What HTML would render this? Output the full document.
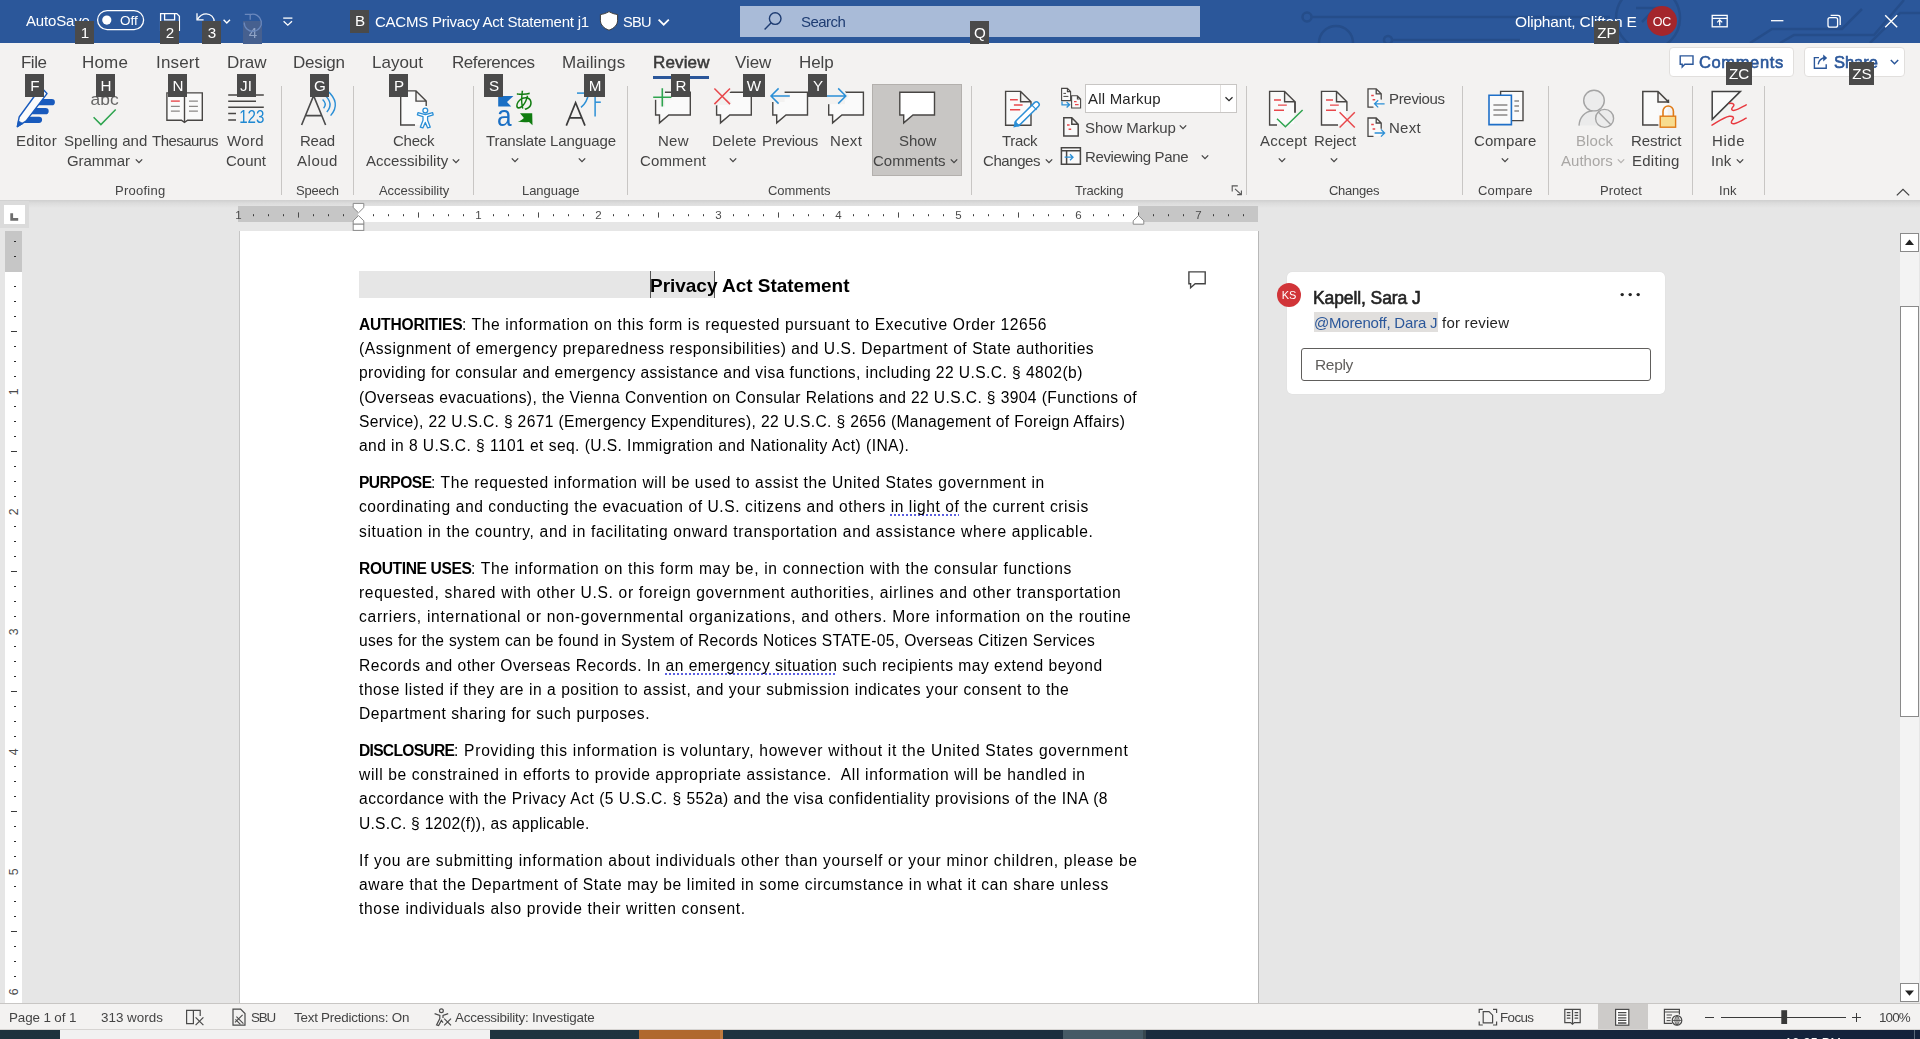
<!DOCTYPE html>
<html lang="en"><head><meta charset="utf-8"><title>CACMS Privacy Act Statement j1 - Word</title>
<style>
html,body{margin:0;padding:0;}
body{width:1920px;height:1039px;overflow:hidden;position:relative;background:#e6e6e6;font-family:"Liberation Sans", sans-serif;}
span{will-change:transform;}

</style></head><body>
<div style="position:absolute;left:0px;top:0px;width:1920px;height:43px;background:#2b579a;"></div>
<div style="position:absolute;left:0px;top:43px;width:1920px;height:157px;background:#f3f2f1;"></div>
<div style="position:absolute;left:0px;top:200px;width:1920px;height:8px;background:linear-gradient(#cfcfcf,#dcdcdc 40%,#e6e6e6);"></div>
<svg style="position:absolute;left:1280px;top:0px;" width="640" height="43" viewBox="0 0 640 43">
<g fill="none" stroke="#254d8a" stroke-width="2.5">
<circle cx="27" cy="17" r="4.5"/><path d="M32 17H330"/>
<circle cx="56" cy="43" r="17"/><circle cx="108" cy="40" r="4"/><path d="M112 40H240"/>
<circle cx="368" cy="18" r="32"/><path d="M356 8h20l-14 14"/>
<path d="M470 43l22-14h70l20-20"/><path d="M500 43l14-8h80l30-35"/><path d="M590 43l30-30h20"/>
</g></svg>
<span style="position:absolute;left:25.60px;top:12px;font-size:15px;line-height:18px;color:#fff;white-space:pre;letter-spacing:-0.156px;">AutoSave</span>
<svg style="position:absolute;left:0px;top:0px;" width="320" height="43" viewBox="0 0 320 43">
<g fill="none" stroke="#fff" stroke-width="1.3">
<rect x="97.6" y="10.6" width="46" height="19" rx="9.5"/>
<circle cx="106.8" cy="20.1" r="4.6" fill="#fff" stroke="none"/>
<path d="M160.6 13.6h16.2l2.6 2.6v14.2h-18.8z"/><path d="M164.6 13.8v6h10v-6"/><path d="M163.6 30.4v-6.5h12.6v6.5"/>
<path d="M197 13.2v6.6h6.6"/><path d="M197.4 19.4c2.2-3.6 5.4-5.6 8.8-5.6 4.6 0 8 3.6 8 8 0 4.6-3.6 8.2-8 8.2"/>
<path d="M223.6 19.8l3.2 3.2 3.2-3.2" stroke-width="1.4"/>

<path d="M283.2 18.1h9.2" stroke-width="1.3"/><path d="M283.6 21.2l4.2 4 4.2-4" stroke-width="1.3"/>
</g></svg>
<span style="position:absolute;left:119.99px;top:13px;font-size:13.5px;line-height:16px;color:#fff;white-space:pre;letter-spacing:0.018px;">Off</span>
<span style="position:absolute;left:375.30px;top:13px;font-size:15px;line-height:18px;color:#fff;white-space:pre;letter-spacing:-0.234px;">CACMS Privacy Act Statement j1</span>
<svg style="position:absolute;left:596px;top:8px;" width="26" height="26" viewBox="0 0 26 26"><path d="M13 3.6c2.8 1.6 5.6 2.6 8.6 2.9v5.8c0 4.6-3.4 8-8.6 9.9-5.2-1.9-8.6-5.3-8.6-9.9V6.5c3-.3 5.8-1.3 8.6-2.9z" fill="#fff" stroke="#3c3c3c" stroke-width="1"/></svg>
<span style="position:absolute;left:623.42px;top:13px;font-size:14.6px;line-height:18px;color:#fff;white-space:pre;letter-spacing:-0.721px;">SBU</span>
<svg style="position:absolute;left:655px;top:15px;" width="18" height="14" viewBox="0 0 18 14"><path d="M3.6 4.6l5.1 5.1 5.1-5.1" fill="none" stroke="#fff" stroke-width="1.7"/></svg>
<div style="position:absolute;left:740px;top:6px;width:460px;height:31px;background:#a9bbd8;"></div>
<svg style="position:absolute;left:760px;top:8px;" width="28" height="26" viewBox="0 0 28 26"><g fill="none" stroke="#1e3c72" stroke-width="1.4"><circle cx="15.2" cy="10.6" r="5.8"/><path d="M11.2 14.8L4.6 21.6"/></g></svg>
<span style="position:absolute;left:800.90px;top:13px;font-size:15px;line-height:18px;color:#1e3c72;white-space:pre;letter-spacing:-0.555px;">Search</span>
<span style="position:absolute;left:1515.27px;top:12px;font-size:15.5px;line-height:19px;color:#fff;white-space:pre;letter-spacing:-0.173px;">Oliphant, Clifton E</span>
<div style="position:absolute;left:1647px;top:6px;width:30px;height:30px;background:#a4262c;border-radius:50%;"></div>
<span style="position:absolute;left:1162.00px;top:15px;font-size:12.5px;line-height:15px;color:#fff;white-space:pre;width:1000px;text-align:center;">OC</span>
<svg style="position:absolute;left:1700px;top:8px;" width="210" height="28" viewBox="0 0 210 28"><g fill="none" stroke="#fff" stroke-width="1.3">
<rect x="12.2" y="7.4" width="15" height="11.4"/><path d="M12.2 10.4h15"/><path d="M19.7 17.4v-5.2M17.2 14.4l2.5-2.5 2.5 2.5"/>
<path d="M71 12.7h12.4"/>
<rect x="128" y="9.6" width="9.6" height="9.6" rx="2"/><path d="M130.6 7.3h7.2a2.4 2.4 0 0 1 2.4 2.4v7.2"/>
<path d="M185.2 7.2l12 12M197.2 7.2l-12 12" stroke-width="1.4"/>
</g></svg>
<span style="position:absolute;left:20.88px;top:53px;font-size:17px;line-height:20px;color:#444444;white-space:pre;letter-spacing:-0.517px;">File</span>
<span style="position:absolute;left:82.18px;top:53px;font-size:17px;line-height:20px;color:#444444;white-space:pre;letter-spacing:0.170px;">Home</span>
<span style="position:absolute;left:155.98px;top:53px;font-size:17px;line-height:20px;color:#444444;white-space:pre;letter-spacing:0.168px;">Insert</span>
<span style="position:absolute;left:226.68px;top:53px;font-size:17px;line-height:20px;color:#444444;white-space:pre;letter-spacing:-0.033px;">Draw</span>
<span style="position:absolute;left:293.18px;top:53px;font-size:17px;line-height:20px;color:#444444;white-space:pre;letter-spacing:-0.197px;">Design</span>
<span style="position:absolute;left:372.18px;top:53px;font-size:17px;line-height:20px;color:#444444;white-space:pre;letter-spacing:-0.001px;">Layout</span>
<span style="position:absolute;left:452.18px;top:53px;font-size:17px;line-height:20px;color:#444444;white-space:pre;letter-spacing:-0.440px;">References</span>
<span style="position:absolute;left:562.48px;top:53px;font-size:17px;line-height:20px;color:#444444;white-space:pre;letter-spacing:0.110px;">Mailings</span>
<span style="position:absolute;left:735.48px;top:53px;font-size:17px;line-height:20px;color:#444444;white-space:pre;letter-spacing:-0.077px;">View</span>
<span style="position:absolute;left:799.18px;top:53px;font-size:17px;line-height:20px;color:#444444;white-space:pre;letter-spacing:-0.057px;">Help</span>
<span style="position:absolute;left:652.58px;top:53px;font-size:17px;line-height:20px;color:#3b3b3b;white-space:pre;letter-spacing:0.148px;-webkit-text-stroke:0.55px #3b3b3b;">Review</span>
<div style="position:absolute;left:653px;top:75.5px;width:56px;height:3.5px;background:#2b579a;"></div>
<div style="position:absolute;left:1669px;top:47px;width:124.5px;height:30px;background:#fff;border:1px solid #e1dfdd;border-radius:4px;box-sizing:border-box;"></div>
<div style="position:absolute;left:1804px;top:47px;width:100.6px;height:30px;background:#fff;border:1px solid #e1dfdd;border-radius:4px;box-sizing:border-box;"></div>
<svg style="position:absolute;left:1676px;top:50px;" width="24" height="22" viewBox="0 0 24 22"><path d="M4.2 5.9h12.8v8.4h-8.2l-2.6 2.7v-2.7h-2z" fill="none" stroke="#2b579a" stroke-width="1.4"/></svg>
<span style="position:absolute;left:1698.51px;top:52px;font-size:16.5px;line-height:20px;color:#2b579a;white-space:pre;letter-spacing:0.625px;-webkit-text-stroke:0.6px #2b579a;">Comments</span>
<svg style="position:absolute;left:1810px;top:50px;" width="24" height="22" viewBox="0 0 24 22"><g fill="none" stroke="#2b579a" stroke-width="1.4"><path d="M9 7.6H4.4v10.6h11.8v-4"/><path d="M8.2 14.4c.6-4.2 3.4-6.4 7.4-6.6"/><path d="M13.2 4.4l4 3.5-4 3.5z" fill="#2b579a" stroke="none"/></g></svg>
<span style="position:absolute;left:1833.51px;top:52px;font-size:16.5px;line-height:20px;color:#2b579a;white-space:pre;letter-spacing:-0.050px;-webkit-text-stroke:0.6px #2b579a;">Share</span>
<svg style="position:absolute;left:1886px;top:55px;" width="16" height="14" viewBox="0 0 16 14"><path d="M4.8 5l3.7 3.7L12.2 5" fill="none" stroke="#2b579a" stroke-width="1.5"/></svg>
<div style="position:absolute;left:281.0px;top:86px;width:1px;height:109px;background:#c8c6c4;"></div>
<div style="position:absolute;left:352.8px;top:86px;width:1px;height:109px;background:#c8c6c4;"></div>
<div style="position:absolute;left:472.8px;top:86px;width:1px;height:109px;background:#c8c6c4;"></div>
<div style="position:absolute;left:627.0px;top:86px;width:1px;height:109px;background:#c8c6c4;"></div>
<div style="position:absolute;left:971.0px;top:86px;width:1px;height:109px;background:#c8c6c4;"></div>
<div style="position:absolute;left:1245.8px;top:86px;width:1px;height:109px;background:#c8c6c4;"></div>
<div style="position:absolute;left:1462.0px;top:86px;width:1px;height:109px;background:#c8c6c4;"></div>
<div style="position:absolute;left:1547.8px;top:86px;width:1px;height:109px;background:#c8c6c4;"></div>
<div style="position:absolute;left:1691.9px;top:86px;width:1px;height:109px;background:#c8c6c4;"></div>
<div style="position:absolute;left:1764.1px;top:86px;width:1px;height:109px;background:#c8c6c4;"></div>
<div style="position:absolute;left:872px;top:84px;width:90px;height:92px;background:#c8c6c4;border:1px solid #b3b0ad;box-sizing:border-box;"></div>
<span style="position:absolute;left:15.70px;top:132px;font-size:15px;line-height:18px;color:#444444;white-space:pre;letter-spacing:0.302px;">Editor</span>
<span style="position:absolute;left:63.70px;top:132px;font-size:15px;line-height:18px;color:#444444;white-space:pre;letter-spacing:0.068px;">Spelling and</span>
<span style="position:absolute;left:67.40px;top:152px;font-size:15px;line-height:18px;color:#444444;white-space:pre;letter-spacing:-0.063px;">Grammar</span>
<svg style="position:absolute;left:132.5px;top:156.2px;" width="12" height="10" viewBox="0 0 12 10"><path d="M2.8 3.4l3.2 3.2l3.2 -3.2" fill="none" stroke="#444" stroke-width="1.3"/></svg>
<span style="position:absolute;left:151.60px;top:132px;font-size:15px;line-height:18px;color:#444444;white-space:pre;letter-spacing:-0.531px;">Thesaurus</span>
<span style="position:absolute;left:227.40px;top:132px;font-size:15px;line-height:18px;color:#444444;white-space:pre;letter-spacing:0.380px;">Word</span>
<span style="position:absolute;left:225.50px;top:152px;font-size:15px;line-height:18px;color:#444444;white-space:pre;letter-spacing:-0.006px;">Count</span>
<span style="position:absolute;left:114.82px;top:183px;font-size:13px;line-height:16px;color:#444444;white-space:pre;letter-spacing:0.242px;">Proofing</span>
<span style="position:absolute;left:300.40px;top:132px;font-size:15px;line-height:18px;color:#444444;white-space:pre;letter-spacing:-0.265px;">Read</span>
<span style="position:absolute;left:297.40px;top:152px;font-size:15px;line-height:18px;color:#444444;white-space:pre;letter-spacing:0.525px;">Aloud</span>
<span style="position:absolute;left:295.62px;top:183px;font-size:13px;line-height:16px;color:#444444;white-space:pre;letter-spacing:-0.239px;">Speech</span>
<span style="position:absolute;left:393.20px;top:132px;font-size:15px;line-height:18px;color:#444444;white-space:pre;letter-spacing:-0.226px;">Check</span>
<span style="position:absolute;left:365.50px;top:152px;font-size:15px;line-height:18px;color:#444444;white-space:pre;letter-spacing:0.039px;">Accessibility</span>
<svg style="position:absolute;left:449.6px;top:156.2px;" width="12" height="10" viewBox="0 0 12 10"><path d="M2.8 3.4l3.2 3.2l3.2 -3.2" fill="none" stroke="#444" stroke-width="1.3"/></svg>
<span style="position:absolute;left:378.72px;top:183px;font-size:13px;line-height:16px;color:#444444;white-space:pre;letter-spacing:-0.049px;">Accessibility</span>
<span style="position:absolute;left:485.50px;top:132px;font-size:15px;line-height:18px;color:#444444;white-space:pre;letter-spacing:-0.209px;">Translate</span>
<svg style="position:absolute;left:509.29999999999995px;top:155px;" width="12" height="10" viewBox="0 0 12 10"><path d="M2.8 3.4l3.2 3.2l3.2 -3.2" fill="none" stroke="#444" stroke-width="1.3"/></svg>
<span style="position:absolute;left:549.60px;top:132px;font-size:15px;line-height:18px;color:#444444;white-space:pre;letter-spacing:-0.106px;">Language</span>
<svg style="position:absolute;left:576.3px;top:155px;" width="12" height="10" viewBox="0 0 12 10"><path d="M2.8 3.4l3.2 3.2l3.2 -3.2" fill="none" stroke="#444" stroke-width="1.3"/></svg>
<span style="position:absolute;left:521.72px;top:183px;font-size:13px;line-height:16px;color:#444444;white-space:pre;letter-spacing:-0.048px;">Language</span>
<span style="position:absolute;left:657.60px;top:132px;font-size:15px;line-height:18px;color:#444444;white-space:pre;letter-spacing:0.228px;">New</span>
<span style="position:absolute;left:639.50px;top:152px;font-size:15px;line-height:18px;color:#444444;white-space:pre;letter-spacing:0.138px;">Comment</span>
<span style="position:absolute;left:711.60px;top:132px;font-size:15px;line-height:18px;color:#444444;white-space:pre;letter-spacing:0.207px;">Delete</span>
<svg style="position:absolute;left:727.3px;top:155px;" width="12" height="10" viewBox="0 0 12 10"><path d="M2.8 3.4l3.2 3.2l3.2 -3.2" fill="none" stroke="#444" stroke-width="1.3"/></svg>
<span style="position:absolute;left:761.70px;top:132px;font-size:15px;line-height:18px;color:#444444;white-space:pre;letter-spacing:-0.295px;">Previous</span>
<span style="position:absolute;left:829.60px;top:132px;font-size:15px;line-height:18px;color:#444444;white-space:pre;letter-spacing:0.339px;">Next</span>
<span style="position:absolute;left:898.60px;top:132px;font-size:15px;line-height:18px;color:#444444;white-space:pre;letter-spacing:-0.083px;">Show</span>
<span style="position:absolute;left:873.20px;top:152px;font-size:15px;line-height:18px;color:#444444;white-space:pre;letter-spacing:0.009px;">Comments</span>
<svg style="position:absolute;left:947.5px;top:156.2px;" width="12" height="10" viewBox="0 0 12 10"><path d="M2.8 3.4l3.2 3.2l3.2 -3.2" fill="none" stroke="#444" stroke-width="1.3"/></svg>
<span style="position:absolute;left:767.82px;top:183px;font-size:13px;line-height:16px;color:#444444;white-space:pre;letter-spacing:-0.050px;">Comments</span>
<span style="position:absolute;left:1002.20px;top:132px;font-size:15px;line-height:18px;color:#444444;white-space:pre;letter-spacing:-0.351px;">Track</span>
<span style="position:absolute;left:983.40px;top:152px;font-size:15px;line-height:18px;color:#444444;white-space:pre;letter-spacing:-0.421px;">Changes</span>
<svg style="position:absolute;left:1042.5px;top:156.2px;" width="12" height="10" viewBox="0 0 12 10"><path d="M2.8 3.4l3.2 3.2l3.2 -3.2" fill="none" stroke="#444" stroke-width="1.3"/></svg>
<div style="position:absolute;left:1085px;top:84.4px;width:151.6px;height:28.2px;background:#fff;border:1px solid #c8c6c4;box-sizing:border-box;"></div>
<div style="position:absolute;left:1220px;top:85px;width:1px;height:27px;background:#e1dfdd;"></div>
<span style="position:absolute;left:1087.60px;top:90px;font-size:15px;line-height:18px;color:#262626;white-space:pre;letter-spacing:0.204px;">All Markup</span>
<svg style="position:absolute;left:1223.2px;top:94.3px;" width="12" height="10" viewBox="0 0 12 10"><path d="M2.5 3.25l3.5 3.5l3.5 -3.5" fill="none" stroke="#262626" stroke-width="1.2"/></svg>
<span style="position:absolute;left:1084.70px;top:119px;font-size:15px;line-height:18px;color:#444444;white-space:pre;letter-spacing:-0.074px;">Show Markup</span>
<svg style="position:absolute;left:1177.3px;top:121.6px;" width="12" height="10" viewBox="0 0 12 10"><path d="M2.8 3.4l3.2 3.2l3.2 -3.2" fill="none" stroke="#444" stroke-width="1.3"/></svg>
<span style="position:absolute;left:1085.00px;top:148px;font-size:15px;line-height:18px;color:#444444;white-space:pre;letter-spacing:-0.379px;">Reviewing Pane</span>
<svg style="position:absolute;left:1199.3px;top:151.8px;" width="12" height="10" viewBox="0 0 12 10"><path d="M2.8 3.4l3.2 3.2l3.2 -3.2" fill="none" stroke="#444" stroke-width="1.3"/></svg>
<span style="position:absolute;left:1074.92px;top:183px;font-size:13px;line-height:16px;color:#444444;white-space:pre;letter-spacing:-0.139px;">Tracking</span>
<svg style="position:absolute;left:1230px;top:184px;" width="14" height="12" viewBox="0 0 14 12"><g fill="none" stroke="#555" stroke-width="1.1"><path d="M2.2 7.4V1.9h5.6"/><path d="M5 4.8l6 5.6M11.4 6.4v4.2H7.2"/></g></svg>
<span style="position:absolute;left:1259.50px;top:132px;font-size:15px;line-height:18px;color:#444444;white-space:pre;letter-spacing:0.207px;">Accept</span>
<svg style="position:absolute;left:1276.2px;top:155px;" width="12" height="10" viewBox="0 0 12 10"><path d="M2.8 3.4l3.2 3.2l3.2 -3.2" fill="none" stroke="#444" stroke-width="1.3"/></svg>
<span style="position:absolute;left:1313.70px;top:132px;font-size:15px;line-height:18px;color:#444444;white-space:pre;letter-spacing:-0.072px;">Reject</span>
<svg style="position:absolute;left:1328.3px;top:155px;" width="12" height="10" viewBox="0 0 12 10"><path d="M2.8 3.4l3.2 3.2l3.2 -3.2" fill="none" stroke="#444" stroke-width="1.3"/></svg>
<span style="position:absolute;left:1388.70px;top:90px;font-size:15px;line-height:18px;color:#444444;white-space:pre;letter-spacing:-0.320px;">Previous</span>
<span style="position:absolute;left:1388.70px;top:119px;font-size:15px;line-height:18px;color:#444444;white-space:pre;letter-spacing:0.239px;">Next</span>
<span style="position:absolute;left:1328.82px;top:183px;font-size:13px;line-height:16px;color:#444444;white-space:pre;letter-spacing:-0.270px;">Changes</span>
<span style="position:absolute;left:1474.20px;top:132px;font-size:15px;line-height:18px;color:#444444;white-space:pre;letter-spacing:0.100px;">Compare</span>
<svg style="position:absolute;left:1499.3px;top:155px;" width="12" height="10" viewBox="0 0 12 10"><path d="M2.8 3.4l3.2 3.2l3.2 -3.2" fill="none" stroke="#444" stroke-width="1.3"/></svg>
<span style="position:absolute;left:1477.62px;top:183px;font-size:13px;line-height:16px;color:#444444;white-space:pre;letter-spacing:0.184px;">Compare</span>
<span style="position:absolute;left:1575.80px;top:132px;font-size:15px;line-height:18px;color:#a9a7a5;white-space:pre;letter-spacing:0.102px;">Block</span>
<span style="position:absolute;left:1560.60px;top:152px;font-size:15px;line-height:18px;color:#a9a7a5;white-space:pre;letter-spacing:0.014px;">Authors</span>
<svg style="position:absolute;left:1614.5px;top:156.2px;" width="12" height="10" viewBox="0 0 12 10"><path d="M2.8 3.4l3.2 3.2l3.2 -3.2" fill="none" stroke="#b5b3b1" stroke-width="1.3"/></svg>
<span style="position:absolute;left:1630.60px;top:132px;font-size:15px;line-height:18px;color:#444444;white-space:pre;letter-spacing:-0.068px;">Restrict</span>
<span style="position:absolute;left:1631.60px;top:152px;font-size:15px;line-height:18px;color:#444444;white-space:pre;letter-spacing:0.261px;">Editing</span>
<span style="position:absolute;left:1599.72px;top:183px;font-size:13px;line-height:16px;color:#444444;white-space:pre;letter-spacing:0.096px;">Protect</span>
<span style="position:absolute;left:1712.40px;top:132px;font-size:15px;line-height:18px;color:#444444;white-space:pre;letter-spacing:0.585px;">Hide</span>
<span style="position:absolute;left:1711.40px;top:152px;font-size:15px;line-height:18px;color:#444444;white-space:pre;letter-spacing:0.128px;">Ink</span>
<svg style="position:absolute;left:1733.7px;top:156.2px;" width="12" height="10" viewBox="0 0 12 10"><path d="M2.8 3.4l3.2 3.2l3.2 -3.2" fill="none" stroke="#444" stroke-width="1.3"/></svg>
<span style="position:absolute;left:1719.42px;top:183px;font-size:13px;line-height:16px;color:#444444;white-space:pre;letter-spacing:0.072px;">Ink</span>
<svg style="position:absolute;left:1894px;top:186px;" width="18" height="12" viewBox="0 0 18 12"><path d="M2.8 9.4l6.2-6 6.2 6" fill="none" stroke="#444" stroke-width="1.3"/></svg>
<svg style="position:absolute;left:0px;top:80px;" width="1920" height="125" viewBox="0 80 1920 125"><g stroke="#185abd" stroke-width="6.2" stroke-linecap="round"><path d="M38 102.2H51.8M31 111.2H45.6M24 119.8H39"/></g>
<path d="M17.3 126.7L19.2 117L36 94L43.2 89.5L47 93.6L26 121.2Z" fill="#fbfbfb" stroke="#185abd" stroke-width="1.4" stroke-linejoin="round"/>
<path d="M17.2 126.9L18.4 121L23 123.6Z" fill="#185abd" stroke="#185abd" stroke-width="0.8"/><text x="90.6" y="105.3" font-size="17.4" fill="#666666" font-family="Liberation Sans, sans-serif">abc</text><path d="M93.6 117.2L100.9 124.6L115.7 109.5" fill="none" stroke="#2ea44f" stroke-width="1.5"/><path d="M184.5 122.4L181.4 120.2H166.9V92.9H202.3V120.2H187.6Z" fill="#fafafa" stroke="#484644" stroke-width="1.4"/><path d="M184.5 92.9V122" stroke="#484644" stroke-width="1.4"/><path d="M170.9 101.1H179.8" stroke="#e8484c" stroke-width="1.4"/><path d="M170.9 106.4H179.8M170.9 111.1H179.8M189 101.1H197.9M189 106.4H197.9M189 111.1H197.9" stroke="#8a8886" stroke-width="1.3"/><path d="M228.2 94.9H263.8M228.2 101.2H256M228.2 107.3H263.8M228.2 113.6H236M228.2 119.9H236" stroke="#484644" stroke-width="1.5"/><text x="239.2" y="123.3" font-size="18.6" fill="#1e88d2" font-family="Liberation Sans, sans-serif" textLength="25.2" lengthAdjust="spacingAndGlyphs">123</text><path d="M301.6 125L313.6 95.6L325.6 125M305.8 115.6H321.4" fill="none" stroke="#4a4a4a" stroke-width="1.6"/><g fill="none" stroke="#2b8fd6" stroke-width="1.4"><path d="M327 90.4Q341.6 103 330.6 115.6"/><path d="M324.6 95Q334.2 103.6 326.8 112"/><path d="M322.6 99.6Q327.4 104 323.6 108.2"/></g><path d="M400.7 90.9H416L426.2 101.1V125H400.7Z M416 90.9V101.1H426.2" fill="#fafafa" stroke="#484644" stroke-width="1.4"/><rect x="415" y="106" width="20" height="23" fill="#f3f2f1"/><rect x="415" y="106" width="11.2" height="19" fill="#fafafa"/><g fill="#fff" stroke="#2b8fd6" stroke-width="1.3" stroke-linejoin="round"><circle cx="425.3" cy="110.6" r="2.4"/><path d="M417.4 114.9L423 116.7V120.2L420.3 127.2L422.9 127.9L425.3 122.4L427.7 127.9L430.3 127.2L427.6 120.2V116.7L433.2 114.9L432.6 112.6L425.3 114.6L418 112.6Z"/></g><path d="M498.2 96H513.4L507 101.9L511.2 106.5H498.2Z" fill="#1a6fc4"/><text x="497" y="125.7" font-size="29.5" fill="#1a6fc4" font-family="Liberation Sans, sans-serif" textLength="14.6" lengthAdjust="spacingAndGlyphs">a</text><text x="514" y="108.4" font-size="22" fill="#107c10" font-family="Liberation Sans, Noto Sans CJK JP, sans-serif" textLength="19.6" lengthAdjust="spacingAndGlyphs">あ</text><path d="M520 113.2H532.2L532.5 125.3L529 122C525 122.4 521 122.2 517.8 121.6C520.6 120.8 522.6 119.6 523.9 118Z" fill="#107c10"/><path d="M566.3 125.6L575.6 102.8L585 125.6M569.6 117.8H581.6" fill="none" stroke="#3c3c3c" stroke-width="1.7"/><g fill="none" stroke="#2b8fd6" stroke-width="1.5"><path d="M577 93.1H600.6"/><path d="M595.1 93.1V116.6"/><path d="M588.6 93.4C587.6 99.4 585.4 104 581 107.4"/><path d="M595.1 102.2H600.8"/></g><path d="M655.6 92.3H690.3000000000001V115H668.8000000000001L659.5 122.9V115H655.6Z" fill="#fafafa" stroke="#484644" stroke-width="1.4" stroke-linejoin="miter"/><rect x="651.5" y="87" width="13.1" height="12.3" fill="#f3f2f1"/><path d="M653.2 97.3H671.4M662.3 88.2V106.4" fill="none" stroke="#f3f2f1" stroke-width="5.0"/><path d="M653.2 97.3H671.4M662.3 88.2V106.4" fill="none" stroke="#2ea44f" stroke-width="1.6"/><path d="M716.6 92.3H751.3000000000001V115H729.8000000000001L720.5 122.9V115H716.6Z" fill="#fafafa" stroke="#484644" stroke-width="1.4" stroke-linejoin="miter"/><rect x="712.5" y="87" width="17.1" height="17.8" fill="#f3f2f1"/><path d="M714.4 88.5L730 104.1M730 88.5L714.4 104.1" fill="none" stroke="#f3f2f1" stroke-width="4.9"/><path d="M714.4 88.5L730 104.1M730 88.5L714.4 104.1" fill="none" stroke="#e8484c" stroke-width="1.5"/><path d="M772.8 92.3H807.5V115H786.0L776.6999999999999 122.9V115H772.8Z" fill="#fafafa" stroke="#484644" stroke-width="1.4" stroke-linejoin="miter"/><rect x="768.5" y="87" width="16.1" height="15" fill="#f3f2f1"/><path d="M771 96H789.8M778.6 88.4L771 96L778.6 103.6" fill="none" stroke="#f3f2f1" stroke-width="4.9"/><path d="M771 96H789.8M778.6 88.4L771 96L778.6 103.6" fill="none" stroke="#2b8fd6" stroke-width="1.5"/><path d="M828.7 92.3H863.4000000000001V115H841.9000000000001L832.6 122.9V115H828.7Z" fill="#fafafa" stroke="#484644" stroke-width="1.4" stroke-linejoin="miter"/><rect x="824.5" y="87" width="20.5" height="17.2" fill="#f3f2f1"/><path d="M826 96H845.8M838.2 88.4L845.8 96L838.2 103.6" fill="none" stroke="#f3f2f1" stroke-width="4.9"/><path d="M826 96H845.8M838.2 88.4L845.8 96L838.2 103.6" fill="none" stroke="#2b8fd6" stroke-width="1.5"/><path d="M899.8 92.3H934.5V115H913.0L903.6999999999999 122.9V115H899.8Z" fill="#fff" stroke="#484644" stroke-width="1.4" stroke-linejoin="miter"/><path d="M1005.6 91.4H1020.6L1031.0 101.80000000000001V125.2H1005.6Z M1020.6 91.4V101.80000000000001H1031.0" fill="#fafafa" stroke="#484644" stroke-width="1.4"/><path d="M1010 99.8H1017.8M1013.9 105H1022.6M1010 109.8H1020.2" stroke="#e8484c" stroke-width="1.4"/><path d="M1018 122.8L1036.4 104.6" stroke="#2b8fd6" stroke-width="7" stroke-linecap="round"/><path d="M1018.6 122.2L1036.4 104.6" stroke="#fff" stroke-width="4" stroke-linecap="round"/><path d="M1013.4 127.6l1.6-6.6 5.2 5z" fill="#2b8fd6"/><path d="M1031.4 104.6l5.2 5.2" stroke="#2b8fd6" stroke-width="1.2"/><g fill="#fafafa" stroke="#484644" stroke-width="1.1"><path d="M1061.6 88.4H1067.4L1070.6 91.6V100.6H1061.6Z M1067.4 88.4V91.6H1070.6"/><path d="M1071.6 95.8H1077.4L1080.6 99V108H1071.6Z M1077.4 95.8V99H1080.6"/></g><path d="M1063.4 93.4H1066M1063.4 96.4H1068.4" stroke="#484644" stroke-width="1"/><path d="M1074 101.6H1076.6M1075 104.6H1078.6" stroke="#e8484c" stroke-width="1.3"/><path d="M1062 101.6V104.8H1069.4M1066.6 102L1069.6 104.8L1066.6 107.6" fill="none" stroke="#2b8fd6" stroke-width="1.3"/><path d="M1063.8 117.8H1071.8L1078.2 124.2V136.0H1063.8Z M1071.8 117.8V124.2H1078.2" fill="#fafafa" stroke="#484644" stroke-width="1.5"/><path d="M1067 125H1069.6M1068.6 129.2H1071.2" stroke="#e8484c" stroke-width="1.5"/><path d="M1061.4 147.8H1080.4V164.2H1061.4ZM1061.4 150.8H1080.4M1066.6 150.8V164.2" fill="#fafafa" stroke="#484644" stroke-width="1.5"/><path d="M1064.6 157.2H1072.8M1070 154.2L1073 157.2L1070 160.2" fill="none" stroke="#2b8fd6" stroke-width="1.3"/><path d="M1269.6 91.4H1284.6L1295.0 101.80000000000001V125.0H1269.6Z M1284.6 91.4V101.80000000000001H1295.0" fill="#fafafa" stroke="#484644" stroke-width="1.4"/><rect x="1277" y="112" width="20" height="15" fill="#f3f2f1"/><rect x="1277" y="112" width="17.2" height="12.2" fill="#fafafa"/><path d="M1295 101.6V113" stroke="#484644" stroke-width="1.4"/><path d="M1274 100H1281M1278 105.1H1286.8M1274 110.3H1284" stroke="#e8484c" stroke-width="1.4"/><path d="M1277 118.7L1285.4 126.8L1302.6 110" fill="none" stroke="#2ea44f" stroke-width="1.5"/><path d="M1321.5 91.4H1336.5L1346.9 101.80000000000001V125.0H1321.5Z M1336.5 91.4V101.80000000000001H1346.9" fill="#fafafa" stroke="#484644" stroke-width="1.4"/><rect x="1338" y="111" width="18" height="17" fill="#f3f2f1"/><rect x="1338" y="111" width="8.2" height="13.2" fill="#fafafa"/><path d="M1326 100H1333M1330 105.1H1338.8M1326 110.3H1336" stroke="#e8484c" stroke-width="1.4"/><path d="M1339.6 112.3L1354.8 127.5M1354.8 112.3L1339.6 127.5" stroke="#e8484c" stroke-width="1.5"/><path d="M1368 88.8H1376.2L1381.2 93.8V107.19999999999999H1368Z M1376.2 88.8V93.8H1381.2" fill="#fafafa" stroke="#484644" stroke-width="1.3"/><rect x="1373.5" y="99.6" width="12" height="9" fill="#f3f2f1"/><rect x="1373.5" y="99.6" width="7" height="7" fill="#fafafa"/><path d="M1371.2 95.4H1373.8M1372.6 99.8H1375.2" stroke="#e8484c" stroke-width="1.5"/><path d="M1374.6 103.8H1384.6M1378.2 100.2L1374.6 103.8L1378.2 107.4" fill="none" stroke="#2b8fd6" stroke-width="1.3"/><path d="M1368 118.0H1376.2L1381.2 123.0V136.4H1368Z M1376.2 118.0V123.0H1381.2" fill="#fafafa" stroke="#484644" stroke-width="1.3"/><rect x="1373.5" y="128.79999999999998" width="12" height="9" fill="#f3f2f1"/><rect x="1373.5" y="128.79999999999998" width="7" height="7" fill="#fafafa"/><path d="M1371.2 124.60000000000001H1373.8M1372.6 129.0H1375.2" stroke="#e8484c" stroke-width="1.5"/><path d="M1374.6 133.0H1384.6M1381 129.4L1384.6 133.0L1381 136.6" fill="none" stroke="#2b8fd6" stroke-width="1.3"/><path d="M1500.6 91.4H1523V120.6H1500.6Z" fill="#fafafa" stroke="#484644" stroke-width="1.4"/><path d="M1514.4 101H1519M1514.4 106H1519M1514.4 111H1519" stroke="#8a8886" stroke-width="1.3"/><path d="M1489 95.2H1511.4V124.6H1489Z" fill="#fafafa" stroke="#1e6fc8" stroke-width="1.6"/><path d="M1493.4 105H1507.4M1493.4 110H1507.4M1493.4 115H1507.4" stroke="#8a8886" stroke-width="1.4"/><path d="M1579 125.6C1579.6 117 1585 111.6 1592.4 110.8L1600 112L1598 125.6Z" fill="#ebebeb"/><path d="M1579 125.6C1579.6 117 1585 111.6 1592.4 110.8" fill="none" stroke="#a4a4a4" stroke-width="1.4"/><circle cx="1594" cy="100.6" r="10.3" fill="#ececec" stroke="#a4a4a4" stroke-width="1.4"/><circle cx="1604.6" cy="118.4" r="9" fill="#ececec" stroke="#a4a4a4" stroke-width="1.4"/><path d="M1598.3 112.1L1610.9 124.7" stroke="#a4a4a4" stroke-width="1.4"/><path d="M1642.8 91.5H1657.9999999999998L1668.3999999999999 101.9V125.0H1642.8Z M1657.9999999999998 91.5V101.9H1668.3999999999999" fill="#fafafa" stroke="#484644" stroke-width="1.5"/><rect x="1658.4" y="103" width="19" height="26" fill="#f3f2f1"/><rect x="1658.4" y="103" width="9.2" height="21.2" fill="#fafafa"/><path d="M1668.4 99.6V103" stroke="#484644" stroke-width="1.5"/><path d="M1663 116V111.2A5.2 5.2 0 0 1 1673.4 111.2V116" fill="none" stroke="#e07b17" stroke-width="1.6"/><rect x="1660.2" y="116.2" width="15.4" height="11" fill="#f8dc8e" stroke="#e07b17" stroke-width="1.4"/><path d="M1712.2 91.4H1740.4L1712.2 119.4Z" fill="#fafafa" stroke="#404040" stroke-width="1.5"/><g fill="none" stroke="#e8393f" stroke-width="1.5" stroke-linecap="round"><path d="M1729.4 103.4C1733 102.8 1735.2 104.6 1733 106.8C1730.8 109 1731.4 110.8 1734.4 110.3C1738 109.6 1742 107 1746.2 104.8"/><path d="M1712 125.2C1718 121.6 1724 117 1729.4 116.2C1733 115.8 1734.6 117.6 1732.6 119.8C1730.4 122.2 1731 124.1 1734 123.7C1738 123 1742 120.4 1746.2 118.2"/></g></svg>
<div style="position:absolute;left:0px;top:201px;width:29px;height:27px;background:#dbdbdb;"></div>
<div style="position:absolute;left:4px;top:205px;width:20.5px;height:19.2px;background:#ffffff;"></div>
<svg style="position:absolute;left:8px;top:210px;" width="14" height="14" viewBox="0 0 14 14"><path d="M3.7 3.2V9.4H10.2" fill="none" stroke="#6e6e6e" stroke-width="2.8"/></svg>
<div style="position:absolute;left:238px;top:206px;width:1019.8px;height:16px;background:#ffffff;"></div>
<div style="position:absolute;left:238px;top:206px;width:120px;height:16px;background:#c6c6c6;"></div>
<div style="position:absolute;left:1137.8px;top:206px;width:120px;height:16px;background:#c6c6c6;"></div>
<svg style="position:absolute;left:0px;top:200px;" width="1920" height="35" viewBox="0 200 1920 35"><text x="238.5" y="219" font-size="11.5" text-anchor="middle" fill="#4a4a4a" font-family="Liberation Sans, sans-serif">1</text><rect x="253.0" y="214.2" width="1" height="2" fill="#3a3a3a"/><rect x="268.0" y="214.2" width="1" height="2" fill="#3a3a3a"/><rect x="283.0" y="214.2" width="1" height="2" fill="#3a3a3a"/><rect x="298.0" y="212.4" width="1" height="5.2" fill="#4a4a4a"/><rect x="313.0" y="214.2" width="1" height="2" fill="#3a3a3a"/><rect x="328.0" y="214.2" width="1" height="2" fill="#3a3a3a"/><rect x="343.0" y="214.2" width="1" height="2" fill="#3a3a3a"/><rect x="373.0" y="214.2" width="1" height="2" fill="#3a3a3a"/><rect x="388.0" y="214.2" width="1" height="2" fill="#3a3a3a"/><rect x="403.0" y="214.2" width="1" height="2" fill="#3a3a3a"/><rect x="418.0" y="212.4" width="1" height="5.2" fill="#4a4a4a"/><rect x="433.0" y="214.2" width="1" height="2" fill="#3a3a3a"/><rect x="448.0" y="214.2" width="1" height="2" fill="#3a3a3a"/><rect x="463.0" y="214.2" width="1" height="2" fill="#3a3a3a"/><text x="478.5" y="219" font-size="11.5" text-anchor="middle" fill="#4a4a4a" font-family="Liberation Sans, sans-serif">1</text><rect x="493.0" y="214.2" width="1" height="2" fill="#3a3a3a"/><rect x="508.0" y="214.2" width="1" height="2" fill="#3a3a3a"/><rect x="523.0" y="214.2" width="1" height="2" fill="#3a3a3a"/><rect x="538.0" y="212.4" width="1" height="5.2" fill="#4a4a4a"/><rect x="553.0" y="214.2" width="1" height="2" fill="#3a3a3a"/><rect x="568.0" y="214.2" width="1" height="2" fill="#3a3a3a"/><rect x="583.0" y="214.2" width="1" height="2" fill="#3a3a3a"/><text x="598.5" y="219" font-size="11.5" text-anchor="middle" fill="#4a4a4a" font-family="Liberation Sans, sans-serif">2</text><rect x="613.0" y="214.2" width="1" height="2" fill="#3a3a3a"/><rect x="628.0" y="214.2" width="1" height="2" fill="#3a3a3a"/><rect x="643.0" y="214.2" width="1" height="2" fill="#3a3a3a"/><rect x="658.0" y="212.4" width="1" height="5.2" fill="#4a4a4a"/><rect x="673.0" y="214.2" width="1" height="2" fill="#3a3a3a"/><rect x="688.0" y="214.2" width="1" height="2" fill="#3a3a3a"/><rect x="703.0" y="214.2" width="1" height="2" fill="#3a3a3a"/><text x="718.5" y="219" font-size="11.5" text-anchor="middle" fill="#4a4a4a" font-family="Liberation Sans, sans-serif">3</text><rect x="733.0" y="214.2" width="1" height="2" fill="#3a3a3a"/><rect x="748.0" y="214.2" width="1" height="2" fill="#3a3a3a"/><rect x="763.0" y="214.2" width="1" height="2" fill="#3a3a3a"/><rect x="778.0" y="212.4" width="1" height="5.2" fill="#4a4a4a"/><rect x="793.0" y="214.2" width="1" height="2" fill="#3a3a3a"/><rect x="808.0" y="214.2" width="1" height="2" fill="#3a3a3a"/><rect x="823.0" y="214.2" width="1" height="2" fill="#3a3a3a"/><text x="838.5" y="219" font-size="11.5" text-anchor="middle" fill="#4a4a4a" font-family="Liberation Sans, sans-serif">4</text><rect x="853.0" y="214.2" width="1" height="2" fill="#3a3a3a"/><rect x="868.0" y="214.2" width="1" height="2" fill="#3a3a3a"/><rect x="883.0" y="214.2" width="1" height="2" fill="#3a3a3a"/><rect x="898.0" y="212.4" width="1" height="5.2" fill="#4a4a4a"/><rect x="913.0" y="214.2" width="1" height="2" fill="#3a3a3a"/><rect x="928.0" y="214.2" width="1" height="2" fill="#3a3a3a"/><rect x="943.0" y="214.2" width="1" height="2" fill="#3a3a3a"/><text x="958.5" y="219" font-size="11.5" text-anchor="middle" fill="#4a4a4a" font-family="Liberation Sans, sans-serif">5</text><rect x="973.0" y="214.2" width="1" height="2" fill="#3a3a3a"/><rect x="988.0" y="214.2" width="1" height="2" fill="#3a3a3a"/><rect x="1003.0" y="214.2" width="1" height="2" fill="#3a3a3a"/><rect x="1018.0" y="212.4" width="1" height="5.2" fill="#4a4a4a"/><rect x="1033.0" y="214.2" width="1" height="2" fill="#3a3a3a"/><rect x="1048.0" y="214.2" width="1" height="2" fill="#3a3a3a"/><rect x="1063.0" y="214.2" width="1" height="2" fill="#3a3a3a"/><text x="1078.5" y="219" font-size="11.5" text-anchor="middle" fill="#4a4a4a" font-family="Liberation Sans, sans-serif">6</text><rect x="1093.0" y="214.2" width="1" height="2" fill="#3a3a3a"/><rect x="1108.0" y="214.2" width="1" height="2" fill="#3a3a3a"/><rect x="1123.0" y="214.2" width="1" height="2" fill="#3a3a3a"/><rect x="1138.0" y="212.4" width="1" height="5.2" fill="#4a4a4a"/><rect x="1153.0" y="214.2" width="1" height="2" fill="#3a3a3a"/><rect x="1168.0" y="214.2" width="1" height="2" fill="#3a3a3a"/><rect x="1183.0" y="214.2" width="1" height="2" fill="#3a3a3a"/><text x="1198.5" y="219" font-size="11.5" text-anchor="middle" fill="#4a4a4a" font-family="Liberation Sans, sans-serif">7</text><rect x="1213.0" y="214.2" width="1" height="2" fill="#3a3a3a"/><rect x="1228.0" y="214.2" width="1" height="2" fill="#3a3a3a"/><rect x="1243.0" y="214.2" width="1" height="2" fill="#3a3a3a"/><path d="M353.2 203.4H363.8V207.6L358.5 212.8L353.2 207.6Z" fill="#fff" stroke="#8a8a8a" stroke-width="1"/><path d="M353.2 224.2V220.8L358.5 215.6L363.8 220.8V224.2Z" fill="#fff" stroke="#8a8a8a" stroke-width="1"/><rect x="353.2" y="224.2" width="10.6" height="6.2" fill="#fff" stroke="#8a8a8a" stroke-width="1"/><path d="M1133.2 224.2V220.8L1138.5 215.6L1143.8 220.8V224.2Z" fill="#fff" stroke="#8a8a8a" stroke-width="1"/></svg>
<div style="position:absolute;left:5px;top:231px;width:17px;height:772px;background:#ffffff;"></div>
<div style="position:absolute;left:5px;top:231px;width:17px;height:41px;background:#c6c6c6;"></div>
<svg style="position:absolute;left:0px;top:228px;" width="30" height="776" viewBox="0 228 30 776"><rect x="14" y="241" width="2" height="1" fill="#2a2a2a" shape-rendering="crispEdges"/><rect x="14" y="256" width="2" height="1" fill="#2a2a2a" shape-rendering="crispEdges"/><rect x="14" y="286" width="2" height="1" fill="#2a2a2a" shape-rendering="crispEdges"/><rect x="14" y="301" width="2" height="1" fill="#2a2a2a" shape-rendering="crispEdges"/><rect x="14" y="316" width="2" height="1" fill="#2a2a2a" shape-rendering="crispEdges"/><rect x="11" y="331" width="6" height="1" fill="#3a3a3a" shape-rendering="crispEdges"/><rect x="14" y="346" width="2" height="1" fill="#2a2a2a" shape-rendering="crispEdges"/><rect x="14" y="361" width="2" height="1" fill="#2a2a2a" shape-rendering="crispEdges"/><rect x="14" y="376" width="2" height="1" fill="#2a2a2a" shape-rendering="crispEdges"/><text transform="translate(18 391.8) rotate(-90)" font-size="12.3" text-anchor="middle" fill="#4a4a4a" font-family="Liberation Sans, sans-serif">1</text><rect x="14" y="406" width="2" height="1" fill="#2a2a2a" shape-rendering="crispEdges"/><rect x="14" y="421" width="2" height="1" fill="#2a2a2a" shape-rendering="crispEdges"/><rect x="14" y="436" width="2" height="1" fill="#2a2a2a" shape-rendering="crispEdges"/><rect x="11" y="451" width="6" height="1" fill="#3a3a3a" shape-rendering="crispEdges"/><rect x="14" y="466" width="2" height="1" fill="#2a2a2a" shape-rendering="crispEdges"/><rect x="14" y="481" width="2" height="1" fill="#2a2a2a" shape-rendering="crispEdges"/><rect x="14" y="496" width="2" height="1" fill="#2a2a2a" shape-rendering="crispEdges"/><text transform="translate(18 511.8) rotate(-90)" font-size="12.3" text-anchor="middle" fill="#4a4a4a" font-family="Liberation Sans, sans-serif">2</text><rect x="14" y="526" width="2" height="1" fill="#2a2a2a" shape-rendering="crispEdges"/><rect x="14" y="541" width="2" height="1" fill="#2a2a2a" shape-rendering="crispEdges"/><rect x="14" y="556" width="2" height="1" fill="#2a2a2a" shape-rendering="crispEdges"/><rect x="11" y="571" width="6" height="1" fill="#3a3a3a" shape-rendering="crispEdges"/><rect x="14" y="586" width="2" height="1" fill="#2a2a2a" shape-rendering="crispEdges"/><rect x="14" y="601" width="2" height="1" fill="#2a2a2a" shape-rendering="crispEdges"/><rect x="14" y="616" width="2" height="1" fill="#2a2a2a" shape-rendering="crispEdges"/><text transform="translate(18 631.8) rotate(-90)" font-size="12.3" text-anchor="middle" fill="#4a4a4a" font-family="Liberation Sans, sans-serif">3</text><rect x="14" y="646" width="2" height="1" fill="#2a2a2a" shape-rendering="crispEdges"/><rect x="14" y="661" width="2" height="1" fill="#2a2a2a" shape-rendering="crispEdges"/><rect x="14" y="676" width="2" height="1" fill="#2a2a2a" shape-rendering="crispEdges"/><rect x="11" y="691" width="6" height="1" fill="#3a3a3a" shape-rendering="crispEdges"/><rect x="14" y="706" width="2" height="1" fill="#2a2a2a" shape-rendering="crispEdges"/><rect x="14" y="721" width="2" height="1" fill="#2a2a2a" shape-rendering="crispEdges"/><rect x="14" y="736" width="2" height="1" fill="#2a2a2a" shape-rendering="crispEdges"/><text transform="translate(18 751.8) rotate(-90)" font-size="12.3" text-anchor="middle" fill="#4a4a4a" font-family="Liberation Sans, sans-serif">4</text><rect x="14" y="766" width="2" height="1" fill="#2a2a2a" shape-rendering="crispEdges"/><rect x="14" y="781" width="2" height="1" fill="#2a2a2a" shape-rendering="crispEdges"/><rect x="14" y="796" width="2" height="1" fill="#2a2a2a" shape-rendering="crispEdges"/><rect x="11" y="811" width="6" height="1" fill="#3a3a3a" shape-rendering="crispEdges"/><rect x="14" y="826" width="2" height="1" fill="#2a2a2a" shape-rendering="crispEdges"/><rect x="14" y="841" width="2" height="1" fill="#2a2a2a" shape-rendering="crispEdges"/><rect x="14" y="856" width="2" height="1" fill="#2a2a2a" shape-rendering="crispEdges"/><text transform="translate(18 871.8) rotate(-90)" font-size="12.3" text-anchor="middle" fill="#4a4a4a" font-family="Liberation Sans, sans-serif">5</text><rect x="14" y="886" width="2" height="1" fill="#2a2a2a" shape-rendering="crispEdges"/><rect x="14" y="901" width="2" height="1" fill="#2a2a2a" shape-rendering="crispEdges"/><rect x="14" y="916" width="2" height="1" fill="#2a2a2a" shape-rendering="crispEdges"/><rect x="11" y="931" width="6" height="1" fill="#3a3a3a" shape-rendering="crispEdges"/><rect x="14" y="946" width="2" height="1" fill="#2a2a2a" shape-rendering="crispEdges"/><rect x="14" y="961" width="2" height="1" fill="#2a2a2a" shape-rendering="crispEdges"/><rect x="14" y="976" width="2" height="1" fill="#2a2a2a" shape-rendering="crispEdges"/><text transform="translate(18 991.8) rotate(-90)" font-size="12.3" text-anchor="middle" fill="#4a4a4a" font-family="Liberation Sans, sans-serif">6</text></svg>
<div style="position:absolute;left:239px;top:231px;width:1019.5px;height:772px;background:#ffffff;border-left:1px solid #c6c6c6;border-right:1px solid #b8b8b8;box-sizing:border-box;"></div>
<div style="position:absolute;left:359px;top:271px;width:355.6px;height:27px;background:#e6e6e6;"></div>
<div style="position:absolute;left:650px;top:271px;width:1px;height:27px;background:#555;"></div>
<div style="position:absolute;left:714px;top:271px;width:1px;height:27px;background:#555;"></div>
<span style="position:absolute;left:649.86px;top:274px;font-size:19px;line-height:23px;color:#000;white-space:pre;font-weight:700;letter-spacing:-0.022px;">Privacy Act Statement</span>
<span style="position:absolute;left:358.96px;top:315px;font-size:15.6px;line-height:19px;color:#000;white-space:pre;font-weight:700;letter-spacing:-0.203px;">AUTHORITIES</span>
<span style="position:absolute;left:462.36px;top:315px;font-size:15.6px;line-height:19px;color:#000;white-space:pre;letter-spacing:0.610px;">: The information on this form is requested pursuant to Executive Order 12656</span>
<span style="position:absolute;left:358.76px;top:339px;font-size:15.6px;line-height:19px;color:#000;white-space:pre;letter-spacing:0.553px;">(Assignment of emergency preparedness responsibilities) and U.S. Department of State authorities</span>
<span style="position:absolute;left:358.76px;top:363px;font-size:15.6px;line-height:19px;color:#000;white-space:pre;letter-spacing:0.438px;">providing for consular and emergency assistance and visa functions, including 22 U.S.C. § 4802(b)</span>
<span style="position:absolute;left:358.76px;top:388px;font-size:15.6px;line-height:19px;color:#000;white-space:pre;letter-spacing:0.398px;">(Overseas evacuations), the Vienna Convention on Consular Relations and 22 U.S.C. § 3904 (Functions of</span>
<span style="position:absolute;left:358.76px;top:412px;font-size:15.6px;line-height:19px;color:#000;white-space:pre;letter-spacing:0.356px;">Service), 22 U.S.C. § 2671 (Emergency Expenditures), 22 U.S.C. § 2656 (Management of Foreign Affairs)</span>
<span style="position:absolute;left:358.76px;top:436px;font-size:15.6px;line-height:19px;color:#000;white-space:pre;letter-spacing:0.437px;">and in 8 U.S.C. § 1101 et seq. (U.S. Immigration and Nationality Act) (INA).</span>
<span style="position:absolute;left:358.96px;top:473px;font-size:15.6px;line-height:19px;color:#000;white-space:pre;font-weight:700;letter-spacing:-0.528px;">PURPOSE</span>
<span style="position:absolute;left:431.16px;top:473px;font-size:15.6px;line-height:19px;color:#000;white-space:pre;letter-spacing:0.596px;">: The requested information will be used to assist the United States government in</span>
<span style="position:absolute;left:358.76px;top:497px;font-size:15.6px;line-height:19px;color:#000;white-space:pre;letter-spacing:0.566px;">coordinating and conducting the evacuation of U.S. citizens and others <span style="text-decoration:underline dotted #5b5fe0;text-decoration-thickness:2px;text-underline-offset:2px;text-decoration-skip-ink:none">in light of</span> the current crisis</span>
<span style="position:absolute;left:358.76px;top:522px;font-size:15.6px;line-height:19px;color:#000;white-space:pre;letter-spacing:0.656px;">situation in the country, and in facilitating onward transportation and assistance where applicable.</span>
<span style="position:absolute;left:358.96px;top:559px;font-size:15.6px;line-height:19px;color:#000;white-space:pre;font-weight:700;letter-spacing:-0.366px;">ROUTINE USES</span>
<span style="position:absolute;left:471.16px;top:559px;font-size:15.6px;line-height:19px;color:#000;white-space:pre;letter-spacing:0.680px;">: The information on this form may be, in connection with the consular functions</span>
<span style="position:absolute;left:358.76px;top:583px;font-size:15.6px;line-height:19px;color:#000;white-space:pre;letter-spacing:0.676px;">requested, shared with other U.S. or foreign government authorities, airlines and other transportation</span>
<span style="position:absolute;left:358.76px;top:607px;font-size:15.6px;line-height:19px;color:#000;white-space:pre;letter-spacing:0.724px;">carriers, international or non-governmental organizations, and others. More information on the routine</span>
<span style="position:absolute;left:358.76px;top:631px;font-size:15.6px;line-height:19px;color:#000;white-space:pre;letter-spacing:0.321px;">uses for the system can be found in System of Records Notices STATE-05, Overseas Citizen Services</span>
<span style="position:absolute;left:358.76px;top:656px;font-size:15.6px;line-height:19px;color:#000;white-space:pre;letter-spacing:0.482px;">Records and other Overseas Records. In <span style="text-decoration:underline dotted #5b5fe0;text-decoration-thickness:2px;text-underline-offset:2px;text-decoration-skip-ink:none">an emergency situation</span> such recipients may extend beyond</span>
<span style="position:absolute;left:358.76px;top:680px;font-size:15.6px;line-height:19px;color:#000;white-space:pre;letter-spacing:0.555px;">those listed if they are in a position to assist, and your submission indicates your consent to the</span>
<span style="position:absolute;left:358.76px;top:704px;font-size:15.6px;line-height:19px;color:#000;white-space:pre;letter-spacing:0.584px;">Department sharing for such purposes.</span>
<span style="position:absolute;left:358.96px;top:741px;font-size:15.6px;line-height:19px;color:#000;white-space:pre;font-weight:700;letter-spacing:-0.708px;">DISCLOSURE</span>
<span style="position:absolute;left:453.96px;top:741px;font-size:15.6px;line-height:19px;color:#000;white-space:pre;letter-spacing:0.717px;">: Providing this information is voluntary, however without it the United States government</span>
<span style="position:absolute;left:358.76px;top:765px;font-size:15.6px;line-height:19px;color:#000;white-space:pre;letter-spacing:0.649px;">will be constrained in efforts to provide appropriate assistance.  All information will be handled in</span>
<span style="position:absolute;left:358.76px;top:789px;font-size:15.6px;line-height:19px;color:#000;white-space:pre;letter-spacing:0.489px;">accordance with the Privacy Act (5 U.S.C. § 552a) and the visa confidentiality provisions of the INA (8</span>
<span style="position:absolute;left:358.76px;top:814px;font-size:15.6px;line-height:19px;color:#000;white-space:pre;letter-spacing:0.263px;">U.S.C. § 1202(f)), as applicable.</span>
<span style="position:absolute;left:358.76px;top:851px;font-size:15.6px;line-height:19px;color:#000;white-space:pre;letter-spacing:0.679px;">If you are submitting information about individuals other than yourself or your minor children, please be</span>
<span style="position:absolute;left:358.76px;top:875px;font-size:15.6px;line-height:19px;color:#000;white-space:pre;letter-spacing:0.603px;">aware that the Department of State may be limited in some circumstance in what it can share unless</span>
<span style="position:absolute;left:358.76px;top:899px;font-size:15.6px;line-height:19px;color:#000;white-space:pre;letter-spacing:0.659px;">those individuals also provide their written consent.</span>
<svg style="position:absolute;left:1184px;top:268px;" width="26" height="24" viewBox="0 0 26 24"><path d="M4.9 3.9H21.2V15.8H11.2L6.6 19.8V15.8H4.9Z" fill="#fff" stroke="#444" stroke-width="1.4"/></svg>
<div style="position:absolute;left:1287px;top:271.7px;width:378px;height:122.2px;background:#ffffff;border-radius:5px;box-shadow:0 0 1px rgba(0,0,0,0.12);"></div>
<div style="position:absolute;left:1276.7px;top:282.6px;width:24.8px;height:24.8px;background:#d13438;border-radius:50%;"></div>
<span style="position:absolute;left:789.10px;top:289px;font-size:11px;line-height:13px;color:#fff;white-space:pre;width:1000px;text-align:center;">KS</span>
<span style="position:absolute;left:1312.85px;top:288px;font-size:17.5px;line-height:21px;color:#242424;white-space:pre;letter-spacing:-0.097px;-webkit-text-stroke:0.6px #242424;">Kapell, Sara J</span>
<div style="position:absolute;left:1314px;top:312.2px;width:123.8px;height:19.5px;background:#e1dfdd;"></div>
<span style="position:absolute;left:1314.30px;top:314px;font-size:15px;line-height:18px;color:#2b579a;white-space:pre;letter-spacing:-0.192px;">@Morenoff, Dara J</span>
<span style="position:absolute;left:1441.50px;top:314px;font-size:15px;line-height:18px;color:#242424;white-space:pre;letter-spacing:0.217px;">for review</span>
<div style="position:absolute;left:1301px;top:348px;width:350px;height:33px;background:#fff;border:1px solid #605e5c;border-radius:3px;box-sizing:border-box;"></div>
<span style="position:absolute;left:1314.57px;top:355px;font-size:15.5px;line-height:19px;color:#605e5c;white-space:pre;letter-spacing:-0.336px;">Reply</span>
<svg style="position:absolute;left:1618px;top:290px;" width="26" height="10" viewBox="0 0 26 10"><g fill="#242424"><circle cx="4.2" cy="4.6" r="1.7"/><circle cx="12.2" cy="4.6" r="1.7"/><circle cx="20.2" cy="4.6" r="1.7"/></g></svg>
<div style="position:absolute;left:1900px;top:233px;width:19px;height:768px;background:#f3f3f3;"></div>
<div style="position:absolute;left:1900px;top:233px;width:19px;height:19px;background:#fff;border:1px solid #8a8a8a;box-sizing:border-box;"></div>
<div style="position:absolute;left:1900px;top:982.5px;width:19px;height:19px;background:#fff;border:1px solid #8a8a8a;box-sizing:border-box;"></div>
<div style="position:absolute;left:1900px;top:306px;width:19px;height:411px;background:#fff;border:1px solid #8a8a8a;box-sizing:border-box;"></div>
<svg style="position:absolute;left:1900px;top:233px;" width="19" height="19" viewBox="0 0 19 19"><path d="M5 12L9.5 6.6L14 12Z" fill="#222"/></svg>
<svg style="position:absolute;left:1900px;top:982.5px;" width="19" height="19" viewBox="0 0 19 19"><path d="M5 7.4L9.5 12.8L14 7.4Z" fill="#222"/></svg>
<div style="position:absolute;left:0px;top:1003px;width:1920px;height:27px;background:#f3f2f1;border-top:1px solid #c8c6c4;box-sizing:border-box;"></div>
<div style="position:absolute;left:1598px;top:1003.6px;width:49.5px;height:26.4px;background:#cdcbc9;"></div>
<span style="position:absolute;left:8.60px;top:1010px;font-size:13.4px;line-height:16px;color:#444;white-space:pre;letter-spacing:-0.117px;">Page 1 of 1</span>
<span style="position:absolute;left:100.60px;top:1010px;font-size:13.4px;line-height:16px;color:#444;white-space:pre;letter-spacing:0.012px;">313 words</span>
<span style="position:absolute;left:250.60px;top:1010px;font-size:13.4px;line-height:16px;color:#444;white-space:pre;letter-spacing:-1.213px;">SBU</span>
<span style="position:absolute;left:294.40px;top:1010px;font-size:13.4px;line-height:16px;color:#444;white-space:pre;letter-spacing:-0.236px;">Text Predictions: On</span>
<span style="position:absolute;left:455.40px;top:1010px;font-size:13.4px;line-height:16px;color:#444;white-space:pre;letter-spacing:-0.220px;">Accessibility: Investigate</span>
<span style="position:absolute;left:1499.80px;top:1010px;font-size:13.4px;line-height:16px;color:#444;white-space:pre;letter-spacing:-0.612px;">Focus</span>
<span style="position:absolute;left:1878.60px;top:1010px;font-size:13.4px;line-height:16px;color:#444;white-space:pre;letter-spacing:-0.861px;">100%</span>
<svg style="position:absolute;left:0px;top:1003px;" width="1920" height="28" viewBox="0 1003 1920 28"><path d="M186.6 1010.4H193.4V1023.6H186.6ZM193.4 1010.4H200.2V1016" fill="none" stroke="#4a4a4a" stroke-width="1.2"/><path d="M195.6 1017.4L203.4 1025.2M203.4 1017.4L195.6 1025.2" stroke="#4a4a4a" stroke-width="1.2"/><path d="M233 1009.2H240.6L245 1013.6V1025.2H233Z" fill="none" stroke="#4a4a4a" stroke-width="1.2"/><path d="M235 1022.4L242.6 1014.8M236.4 1016.6L243.4 1023.6M235.4 1019.4L240.4 1024.4" stroke="#4a4a4a" stroke-width="1.1"/><g fill="none" stroke="#4a4a4a" stroke-width="1.2"><circle cx="441.4" cy="1010.8" r="1.9"/><path d="M434.6 1013.6L439.8 1015.4V1018.6L436.6 1025L438.6 1025.6L441.4 1020.4L443 1022.6M448.2 1013.6L443 1015.4V1018"/><path d="M444.2 1018.6L451 1025.4M451 1018.6L444.2 1025.4"/></g><g fill="none" stroke="#4a4a4a" stroke-width="1.2"><path d="M1479.2 1013V1009.4H1482.8M1493 1009.4H1496.6V1013M1496.6 1021.4V1025H1493M1482.8 1025H1479.2V1021.4"/><path d="M1483.2 1011.6H1489L1492.6 1015.2V1022.8H1483.2Z"/></g><g fill="none" stroke="#4a4a4a" stroke-width="1.2"><path d="M1572.5 1024.2L1570.6 1022.6H1564.8V1009.4H1580.2V1022.6H1574.4ZM1572.5 1009.4V1024"/><path d="M1566.8 1012.6H1570.4M1566.8 1015.4H1570.4M1566.8 1018.2H1570.4M1574.6 1012.6H1578.2M1574.6 1015.4H1578.2M1574.6 1018.2H1578.2" stroke-width="1.2"/></g><g fill="none" stroke="#4a4a4a" stroke-width="1.2"><rect x="1615.6" y="1009.4" width="13.2" height="15.8" fill="#fff"/><path d="M1618 1012.6H1626.4M1618 1015.2H1626.4M1618 1017.8H1626.4M1618 1020.4H1626.4M1618 1023H1626.4" stroke-width="1.3"/></g><g fill="none" stroke="#4a4a4a" stroke-width="1.2"><path d="M1672 1023.4H1664.4V1009.4H1679.4V1014.6M1664.4 1012H1679.4"/><path d="M1666.6 1015H1672M1666.6 1017.8H1671M1666.6 1020.6H1670.6" stroke-width="1"/><circle cx="1677" cy="1020.4" r="4.8" fill="#f3f2f1"/><path d="M1672.2 1020.4H1681.8M1677 1015.6V1025.2M1677 1015.6C1674.2 1018.6 1674.2 1022.2 1677 1025.2M1677 1015.6C1679.8 1018.6 1679.8 1022.2 1677 1025.2" stroke-width="0.9"/></g><path d="M1705 1017.5H1714.4M1721.2 1017.5H1845.6M1852 1017.5H1861.4M1856.5 1012.8V1022.2" stroke="#3a3a3a" stroke-width="1" shape-rendering="crispEdges"/><rect x="1781.3" y="1010.2" width="5.8" height="13.8" fill="#383838"/></svg>
<div style="position:absolute;left:0px;top:1030px;width:1920px;height:9px;background:linear-gradient(90deg,#1d323d 0%,#1f3440 35%,#1a2c3e 60%,#14213b 100%);"></div>
<div style="position:absolute;left:60px;top:1030px;width:430px;height:9px;background:#f1f1f1;"></div>
<div style="position:absolute;left:0px;top:1029.4px;width:1920px;height:1px;background:#d6d4d2;"></div>
<div style="position:absolute;left:639px;top:1030px;width:83px;height:9px;background:#b0682f;"></div>
<div style="position:absolute;left:720px;top:1030px;width:3px;height:9px;background:#c07a3e;"></div>
<div style="position:absolute;left:1063px;top:1030px;width:80px;height:9px;background:#455a66;"></div>
<div style="position:absolute;left:1143px;top:1030px;width:3px;height:9px;background:#37474f;"></div>
<div style="position:absolute;left:1914px;top:1030px;width:1px;height:9px;background:#5a6a7a;"></div>
<span style="position:absolute;left:1784.85px;top:1036px;font-size:12.5px;line-height:15px;color:#fff;white-space:pre;letter-spacing:0.348px;">12:35 PM</span>
<div style="position:absolute;left:75px;top:21.2px;width:19px;height:22.4px;background:#4a4a4a;"></div>
<span style="position:absolute;left:-415.50px;top:24px;font-size:15.2px;line-height:18px;color:#ffffff;white-space:pre;width:1000px;text-align:center;">1</span>
<div style="position:absolute;left:160px;top:21.2px;width:19px;height:22.4px;background:#4a4a4a;"></div>
<span style="position:absolute;left:-330.50px;top:24px;font-size:15.2px;line-height:18px;color:#ffffff;white-space:pre;width:1000px;text-align:center;">2</span>
<div style="position:absolute;left:202px;top:21.2px;width:19px;height:22.4px;background:#4a4a4a;"></div>
<span style="position:absolute;left:-288.50px;top:24px;font-size:15.2px;line-height:18px;color:#ffffff;white-space:pre;width:1000px;text-align:center;">3</span>
<div style="position:absolute;left:243px;top:21.2px;width:19px;height:22.4px;background:#46608f;"></div>
<span style="position:absolute;left:-247.50px;top:24px;font-size:15.2px;line-height:18px;color:#8fa3c6;white-space:pre;width:1000px;text-align:center;">4</span>
<div style="position:absolute;left:350px;top:10px;width:19px;height:23px;background:#4a4a4a;"></div>
<span style="position:absolute;left:-140.50px;top:12px;font-size:15.2px;line-height:18px;color:#ffffff;white-space:pre;width:1000px;text-align:center;">B</span>
<div style="position:absolute;left:970px;top:21.2px;width:19px;height:22.4px;background:#4a4a4a;"></div>
<span style="position:absolute;left:479.50px;top:24px;font-size:15.2px;line-height:18px;color:#ffffff;white-space:pre;width:1000px;text-align:center;">Q</span>
<div style="position:absolute;left:1594.3px;top:21.2px;width:25px;height:22.4px;background:#4a4a4a;"></div>
<span style="position:absolute;left:1106.80px;top:24px;font-size:15.2px;line-height:18px;color:#ffffff;white-space:pre;width:1000px;text-align:center;">ZP</span>
<div style="position:absolute;left:25.2px;top:74.2px;width:18.7px;height:22.7px;background:#4a4a4a;"></div>
<span style="position:absolute;left:-465.45px;top:77px;font-size:15.2px;line-height:18px;color:#ffffff;white-space:pre;width:1000px;text-align:center;">F</span>
<div style="position:absolute;left:96.3px;top:74.2px;width:18.6px;height:22.7px;background:#4a4a4a;"></div>
<span style="position:absolute;left:-394.40px;top:77px;font-size:15.2px;line-height:18px;color:#ffffff;white-space:pre;width:1000px;text-align:center;">H</span>
<div style="position:absolute;left:168.3px;top:74.2px;width:18.5px;height:22.7px;background:#4a4a4a;"></div>
<span style="position:absolute;left:-322.45px;top:77px;font-size:15.2px;line-height:18px;color:#ffffff;white-space:pre;width:1000px;text-align:center;">N</span>
<div style="position:absolute;left:237px;top:74.2px;width:18.5px;height:22.7px;background:#4a4a4a;"></div>
<span style="position:absolute;left:-253.75px;top:77px;font-size:15.2px;line-height:18px;color:#ffffff;white-space:pre;width:1000px;text-align:center;">JI</span>
<div style="position:absolute;left:310px;top:74.2px;width:19px;height:22.7px;background:#4a4a4a;"></div>
<span style="position:absolute;left:-180.50px;top:77px;font-size:15.2px;line-height:18px;color:#ffffff;white-space:pre;width:1000px;text-align:center;">G</span>
<div style="position:absolute;left:389.3px;top:74.2px;width:18.5px;height:22.7px;background:#4a4a4a;"></div>
<span style="position:absolute;left:-101.45px;top:77px;font-size:15.2px;line-height:18px;color:#ffffff;white-space:pre;width:1000px;text-align:center;">P</span>
<div style="position:absolute;left:484.3px;top:74.2px;width:18.5px;height:22.7px;background:#4a4a4a;"></div>
<span style="position:absolute;left:-6.45px;top:77px;font-size:15.2px;line-height:18px;color:#ffffff;white-space:pre;width:1000px;text-align:center;">S</span>
<div style="position:absolute;left:584.3px;top:74.2px;width:21px;height:22.7px;background:#4a4a4a;"></div>
<span style="position:absolute;left:94.80px;top:77px;font-size:15.2px;line-height:18px;color:#ffffff;white-space:pre;width:1000px;text-align:center;">M</span>
<div style="position:absolute;left:671.2px;top:74.2px;width:18.6px;height:22.7px;background:#4a4a4a;"></div>
<span style="position:absolute;left:180.50px;top:77px;font-size:15.2px;line-height:18px;color:#ffffff;white-space:pre;width:1000px;text-align:center;">R</span>
<div style="position:absolute;left:743.3px;top:74.2px;width:22px;height:22.7px;background:#4a4a4a;"></div>
<span style="position:absolute;left:254.30px;top:77px;font-size:15.2px;line-height:18px;color:#ffffff;white-space:pre;width:1000px;text-align:center;">W</span>
<div style="position:absolute;left:808.3px;top:74.2px;width:18.5px;height:22.7px;background:#4a4a4a;"></div>
<span style="position:absolute;left:317.55px;top:77px;font-size:15.2px;line-height:18px;color:#ffffff;white-space:pre;width:1000px;text-align:center;">Y</span>
<div style="position:absolute;left:1726px;top:62.2px;width:26.2px;height:22.5px;background:#4a4a4a;"></div>
<span style="position:absolute;left:1239.10px;top:65px;font-size:15.2px;line-height:18px;color:#ffffff;white-space:pre;width:1000px;text-align:center;">ZC</span>
<div style="position:absolute;left:1849px;top:62.2px;width:25.2px;height:22.5px;background:#4a4a4a;"></div>
<span style="position:absolute;left:1361.60px;top:65px;font-size:15.2px;line-height:18px;color:#ffffff;white-space:pre;width:1000px;text-align:center;">ZS</span>
<svg style="position:absolute;left:236px;top:8px;" width="34" height="36" viewBox="0 0 34 36"><g fill="none" stroke="#6a88bd" stroke-width="1.3"><path d="M8.8 6.4H14.2V11.8"/><path d="M14.2 6.6A8.6 8.6 0 1 1 8.2 14.6"/></g></svg>
</body></html>
